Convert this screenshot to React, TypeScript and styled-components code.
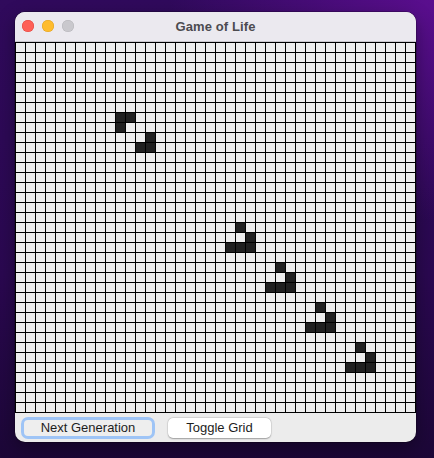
import React from "react";
import styled, { createGlobalStyle } from "styled-components";

const GlobalStyle = createGlobalStyle`
  html, body {
    margin: 0;
    padding: 0;
  }
  body {
    width: 434px;
    height: 458px;
    overflow: hidden;
    font-family: "Liberation Sans", Arial, sans-serif;
    background:
      radial-gradient(ellipse 260px 220px at 430px 0px, #5a0e8e 0%, rgba(90, 14, 142, 0) 100%),
      linear-gradient(180deg, #300a5c 0%, #2a0850 60%, #1c0737 100%);
  }
`;

const Desktop = styled.div`
  width: 434px;
  height: 458px;
  padding: 12px 0 0 15px;
  box-sizing: border-box;
`;

const Window = styled.div`
  width: 401px;
  height: 430px;
  display: flex;
  flex-direction: column;
  background: #ececec;
  border-radius: 10px;
  overflow: hidden;
  box-shadow: 0 6px 18px rgba(0, 0, 0, 0.35), 0 0 0 0.5px rgba(0, 0, 0, 0.4);
`;

const TitleBar = styled.div`
  height: 29px;
  flex-shrink: 0;
  position: relative;
  display: flex;
  align-items: center;
  justify-content: center;
  background: #ebe9ef;
  border-bottom: 1px solid #c9c7cc;
`;

const Lights = styled.div`
  position: absolute;
  left: 7px;
  top: 8px;
  display: flex;
  gap: 8px;
`;

const Light = styled.span<{ $color: string; $edge: string }>`
  width: 12px;
  height: 12px;
  border-radius: 50%;
  background: ${(p) => p.$color};
  box-shadow: inset 0 0 0 0.5px ${(p) => p.$edge};
`;

const Title = styled.div`
  font-size: 13px;
  font-weight: bold;
  color: #4c4b50;
  letter-spacing: 0.1px;
`;

const Board = styled.div`
  width: 401px;
  height: 371px;
  flex-shrink: 0;
  box-sizing: border-box;
  padding: 1px 0 0 1px;
  background-color: #eeeeee;
  background-image:
    linear-gradient(to right, #000 1px, transparent 1px),
    linear-gradient(to bottom, #000 1px, transparent 1px);
  background-size: 10px 10px;
  display: grid;
  grid-template-columns: repeat(40, 9px);
  grid-template-rows: repeat(37, 9px);
  gap: 1px;
`;

const Cell = styled.div<{ $row: number; $col: number }>`
  grid-row: ${(p) => p.$row + 1};
  grid-column: ${(p) => p.$col + 1};
  background: #202020;
`;

const ButtonBar = styled.div`
  flex: 1;
  display: flex;
  align-items: center;
  padding-left: 6px;
  gap: 13px;
`;

const Button = styled.button<{ $focused?: boolean }>`
  font-family: "Liberation Sans", Arial, sans-serif;
  font-size: 13px;
  color: #1d1d1d;
  height: ${(p) => (p.$focused ? "22px" : "20px")};
  width: ${(p) => (p.$focused ? "134px" : "103px")};
  padding: 0;
  border-radius: ${(p) => (p.$focused ? "7px" : "5px")};
  border: ${(p) => (p.$focused ? "3px solid #9ec4f6" : "none")};
  background: ${(p) => (p.$focused ? "#eeeeee" : "#ffffff")};
  box-shadow: ${(p) =>
    p.$focused ? "none" : "0 0.5px 1.5px rgba(0,0,0,0.3), 0 0 0 0.5px rgba(0,0,0,0.08)"};
  box-sizing: border-box;
  display: flex;
  align-items: center;
  justify-content: center;
  line-height: 1;
`;

const live: [number, number][] = [
  [7, 10], [7, 11], [8, 10], [9, 13], [10, 12], [10, 13],
  [18, 22], [19, 23], [20, 21], [20, 22], [20, 23],
  [22, 26], [23, 27], [24, 25], [24, 26], [24, 27],
  [26, 30], [27, 31], [28, 29], [28, 30], [28, 31],
  [30, 34], [31, 35], [32, 33], [32, 34], [32, 35],
];

export default function App() {
  return (
    <Desktop>
      <GlobalStyle />
      <Window>
        <TitleBar>
          <Lights>
            <Light $color="#fe5f57" $edge="#e0443e" />
            <Light $color="#febc2e" $edge="#dea123" />
            <Light $color="#c9c8cd" $edge="#b5b4b9" />
          </Lights>
          <Title>Game of Life</Title>
        </TitleBar>
        <Board>
          {live.map(([r, c]) => (
            <Cell key={`${r}-${c}`} $row={r} $col={c} />
          ))}
        </Board>
        <ButtonBar>
          <Button $focused>Next Generation</Button>
          <Button>Toggle Grid</Button>
        </ButtonBar>
      </Window>
    </Desktop>
  );
}
